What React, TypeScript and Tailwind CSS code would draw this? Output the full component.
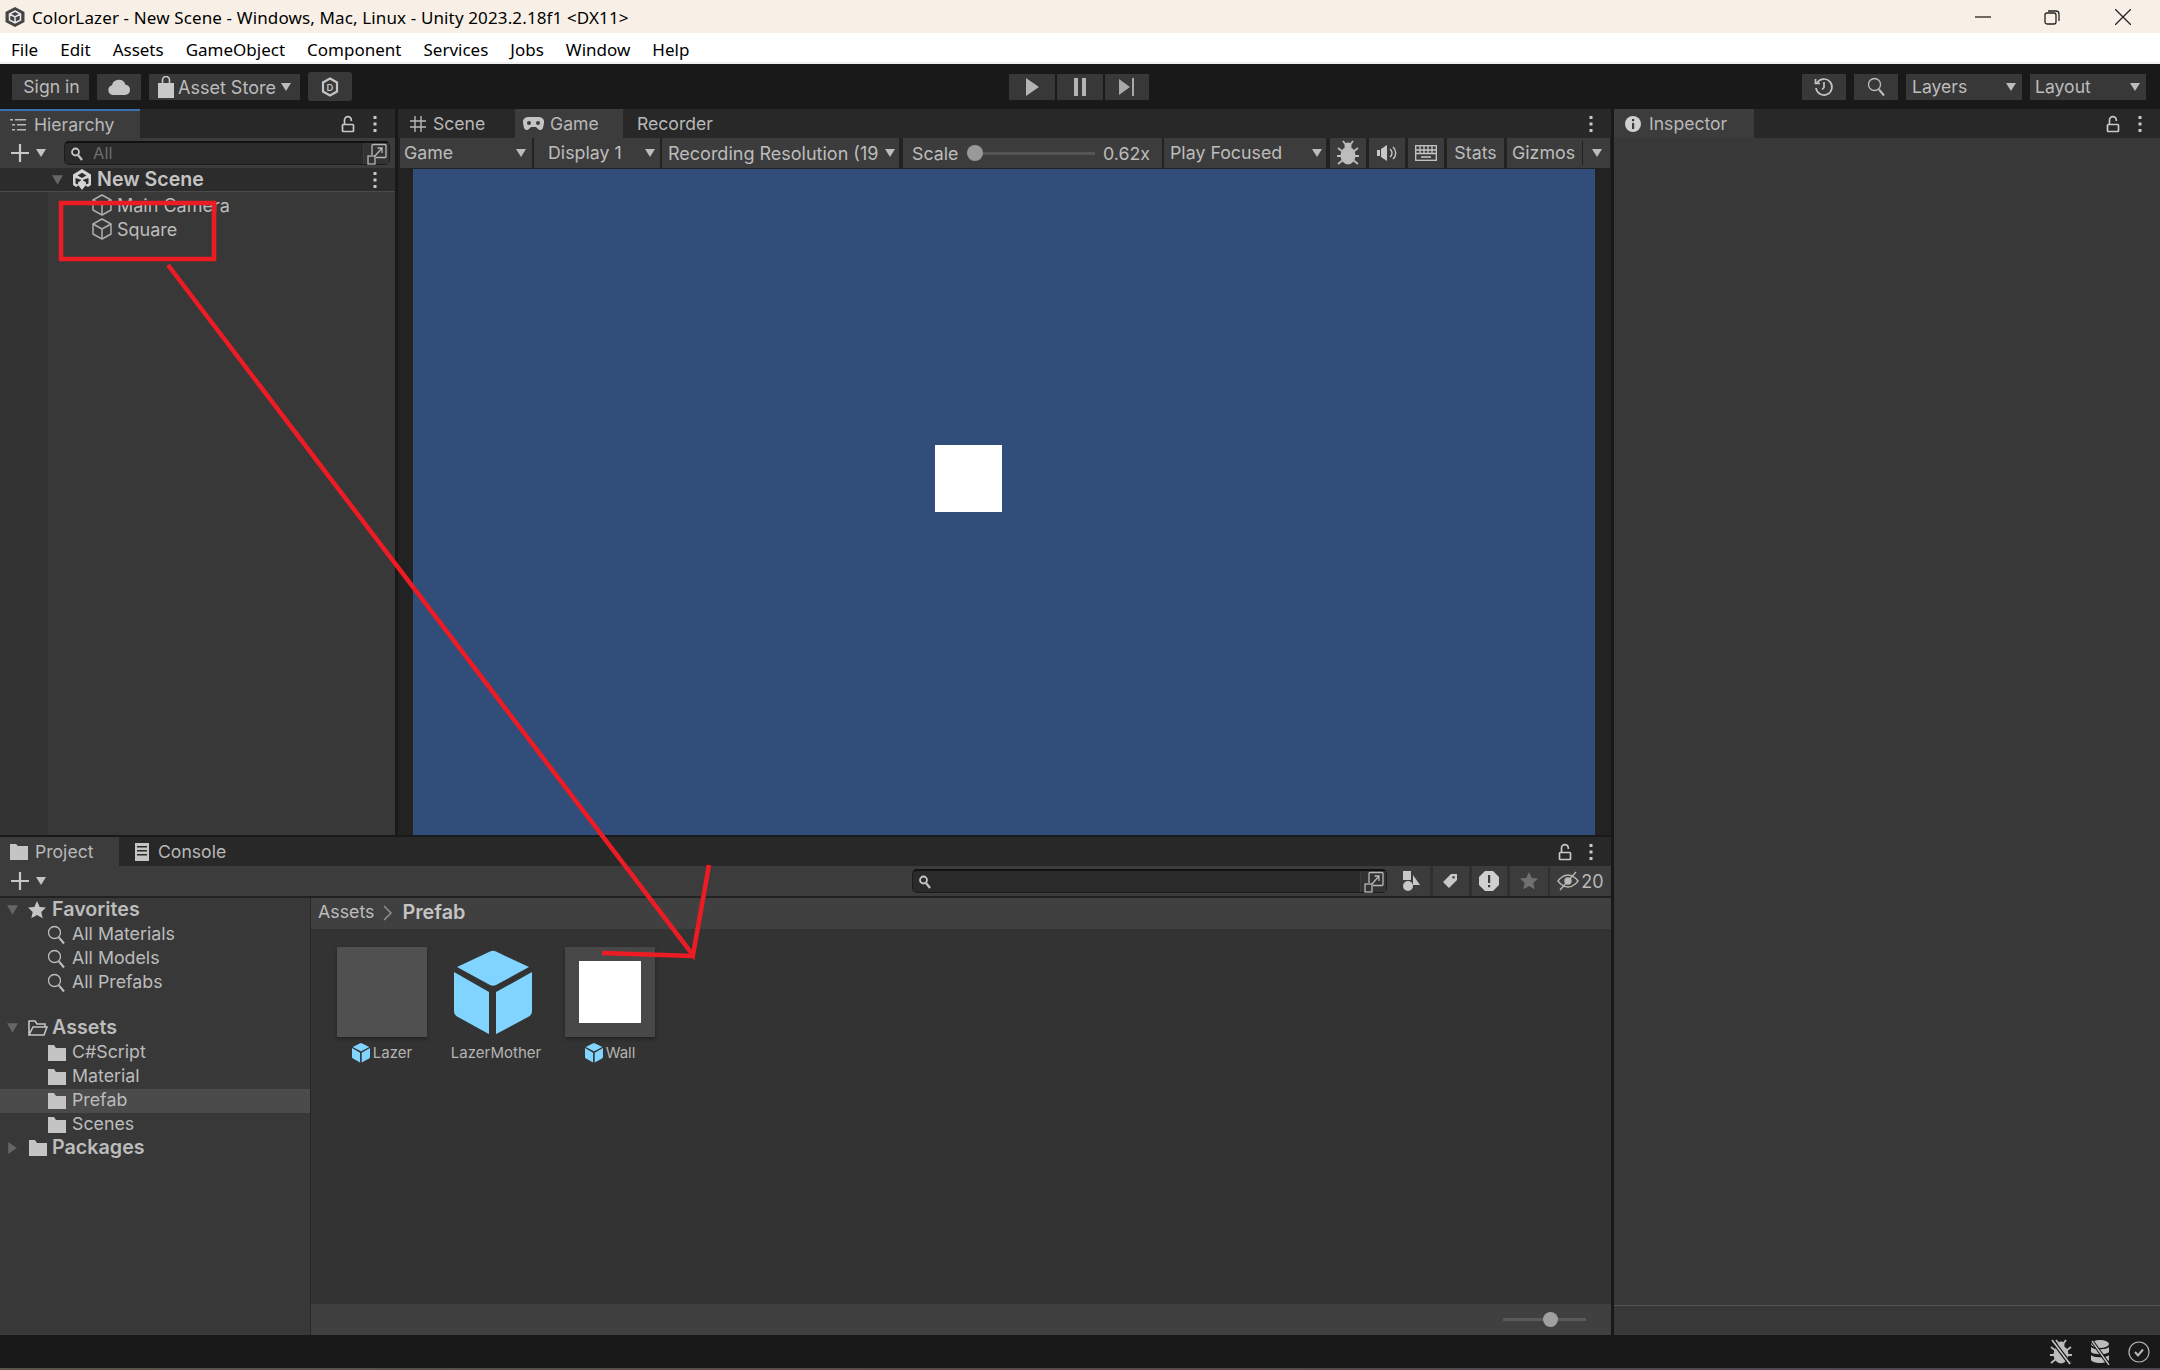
import React from 'react';

const inter = "font-['Inter','Noto_Sans',sans-serif]";

const Caret = ({ className = '', dir = 'down' }: { className?: string; dir?: 'down' | 'right' }) => (
  <svg width="12" height="10" viewBox="0 0 12 10" preserveAspectRatio="none" className={`shrink-0 ${className}`} fill="currentColor">
    {dir === 'down' ? <path d="M1 1h10L6 9z" /> : <path d="M2 0v10l8-5z" />}
  </svg>
);

const Kebab = () => (
  <svg width="6" height="18" viewBox="0 0 6 18" fill="#c8c8c8">
    <rect x="1.5" y="1" width="3" height="3" />
    <rect x="1.5" y="7.5" width="3" height="3" />
    <rect x="1.5" y="14" width="3" height="3" />
  </svg>
);

const Lock = () => (
  <svg width="14" height="18" viewBox="0 0 14 18" fill="none" stroke="#c8c8c8" strokeWidth="1.7" className="ml-[1px]">
    <path d="M3.500 9.500V5a3.400 3.400 0 0 1 6.800 0v1" />
    <rect x="1.500" y="9.500" width="11" height="7" rx=".8" />
  </svg>
);

const CubeOutline = () => (
  <svg width="22" height="24" viewBox="0 0 22 24" fill="none" stroke="#adadad" strokeWidth="1.5" strokeLinejoin="round">
    <path d="M11 2l9 5v10l-9 5-9-5V7z" />
    <path d="M2 7l9 5 9-5M11 12v10" />
  </svg>
);

const BlueCube = ({ size = 18 }: { size?: number }) => (
  <svg width={size} height={size * 1.08} viewBox="0 0 78 84" fill="#80d4ff">
    <path d="M36 1.500q3-1.500 6 0L75 17 42 35q-3 1.500-6 0L3 17z" />
    <path d="M0 22l35 20v42L4 67q-4-2-4-6z" />
    <path d="M78 22L42 42v42l32-17q4-2 4-6z" />
  </svg>
);

const Folder = ({ open = false }: { open?: boolean }) => (
  <svg width="20" height="18" viewBox="0 0 20 18" className="shrink-0" fill={open ? 'none' : '#c4c4c4'} stroke={open ? '#c4c4c4' : 'none'} strokeWidth="1.6">
    {open ? (
      <path d="M1 16V2h6l2 3h8v3M1 16h15l3-8H5z" />
    ) : (
      <path d="M1 1h6l2 3h10v13H1z" />
    )}
  </svg>
);

const Magnifier = () => (
  <svg width="18" height="20" viewBox="0 0 18 20" className="shrink-0" fill="none" stroke="#bdbdbd" strokeWidth="1.3">
    <circle cx="7.5" cy="7.5" r="6" />
    <path d="M12 12.5l5 6" strokeWidth="2" />
  </svg>
);

const MaximizeGlyph = () => (
  <svg width="20" height="22" viewBox="0 0 20 22" fill="none" stroke="#b8b8b8" strokeWidth="1.3">
    <path d="M5 12V2.500a1 1 0 0 1 1-1h12a1 1 0 0 1 1 1v11a1 1 0 0 1-1 1H9" />
    <rect x="1" y="13" width="7" height="8" />
    <path d="M8 13l7-8M10.500 5H15v5" />
  </svg>
);

// the three-armed Unity cube, used in the scene header
const UnityMark = ({ className = '' }: { className?: string }) => (
  <svg width="20" height="22" viewBox="0 0 20 22" className={className} fill="#d4d4d4">
    <path
      fillRule="evenodd"
      d="M10 0l9 5.500v10.500l-3 2-2.500-1.500-3.500 4.500-3.500-4.500L4 18l-3-2V5.500zM10 3.800L5.500 6.400 10 9l4.500-2.600zM3.500 9v5.500l2.500 1v-2.200l3-1.700v-.8zM16.500 9L11 10.800v.8l3 1.700v2.200l2.500-1z"
    />
  </svg>
);

const TitleLogo = () => (
  <svg width="22" height="22" viewBox="0 0 22 22" className="mr-[6px] ml-[3px]">
    <path d="M11 1l9.500 5v10L11 21l-9.500-5V6z" fill="#444" />
    <path d="M11 5l5.500 3v6L11 17l-5.500-3V8zM5.500 8l5.500 3 5.500-3M11 11v6" fill="none" stroke="#e8e8e8" strokeWidth="1.500" />
  </svg>
);

const Bug = ({ off = false }: { off?: boolean }) => (
  <svg width="22" height="26" viewBox="0 0 22 26" fill="#bcbcbc">
    <ellipse cx="11" cy="15.500" rx="7.500" ry="9" />
    <circle cx="11" cy="6" r="3.500" />
    <path d="M6 1l3 4M16 1l-3 4M1 8l5 4M21 8l-5 4M0 16h5M22 16h-5M1 24l5-4M21 24l-5-4" stroke="#bcbcbc" strokeWidth="1.800" fill="none" />
    {off && <path d="M2 1l18 24" stroke="#191919" strokeWidth="4" />}
    {off && <path d="M2 1l18 24" stroke="#c8c8c8" strokeWidth="1.500" />}
  </svg>
);

const ToolBtn = ({ className = '', children }: { className?: string; children: React.ReactNode }) => (
  <div className={`flex items-center bg-[#383838] h-[26px] text-[#bcbcbc] ${className}`}>{children}</div>
);

const TabLabel = ({ icon, label, active, className = '' }: { icon: React.ReactNode; label: string; active?: boolean; className?: string }) => (
  <div className={`flex items-center h-[29px] text-[17.600px] text-[#b8b8b8] ${active ? 'bg-[#3c3c3c]' : ''} ${className}`}>
    {icon}
    <span className="pt-[2px]">{label}</span>
  </div>
);

const GameSeg = ({ className = '', children }: { className?: string; children: React.ReactNode }) => (
  <div className={`flex items-center h-[30px] bg-[#3c3c3c] text-[#bcbcbc] text-[17.800px] shrink-0 ${className}`}>{children}</div>
);

const FilterBtn = ({ className = '', children }: { className?: string; children: React.ReactNode }) => (
  <div className={`flex items-center justify-center h-[30px] bg-[#3c3c3c] shrink-0 ${className}`}>{children}</div>
);

const SearchField = ({ className = '', label }: { className?: string; label?: string }) => (
  <div className={`flex items-center h-[24px] rounded-[5px] border border-[#1c1c1c] border-t-[2px] border-t-[#111] bg-[#2a2a2a] ${className}`}>
    <svg width="14" height="14" viewBox="0 0 14 14" className="ml-[5px] shrink-0" fill="none" stroke="#c4c4c4">
      <circle cx="5.500" cy="5" r="3.500" strokeWidth="1.800" />
      <path d="M8 8l4 5" strokeWidth="2.200" />
    </svg>
    {label && <span className="ml-[9px] text-[16.500px] text-[#6e6e6e]">{label}</span>}
    <div className="ml-auto flex h-full w-[26px] items-center justify-center border-l border-[#3c3c3c] bg-[#333]">
      <MaximizeGlyph />
    </div>
  </div>
);

const TreeRow = ({ depth, label, bold, icon, caret, active }: { depth: number; label: string; bold?: boolean; icon: React.ReactNode; caret?: 'down' | 'right'; active?: boolean }) => (
  <div className={`flex items-center h-[24px] text-[#bcbcbc] ${active ? 'bg-[#4b4b4b]' : ''} ${bold ? 'pb-[3px] text-[19.700px] font-semibold' : 'text-[17.800px]'}`}>
    {depth === 0 ? (
      <>
        <div className="w-[28px] pl-[6px] text-[#666]">{caret && <Caret dir={caret} className="h-[12px] w-[13px]" />}</div>
        <div className="w-[24px] flex justify-start">{icon}</div>
      </>
    ) : (
      <div className="w-[72px] pl-[47px]">{icon}</div>
    )}
    <span className={bold ? '' : 'pb-[2px]'}>{label}</span>
  </div>
);

const PrefabTile = ({ label, hasIcon, children }: { label: string; hasIcon?: boolean; children: React.ReactNode }) => (
  <div className="flex w-[114px] flex-col items-center">
    <div className="flex h-[90px] w-full items-center justify-center">{children}</div>
    <div className="mt-[6px] flex h-[20px] items-center gap-[3px] text-[15px] text-[#b4b4b4]">
      {hasIcon && <BlueCube size={18} />}
      <span>{label}</span>
    </div>
  </div>
);

export default function App() {
  return (
    <div className={`relative flex h-[1370px] w-[2160px] flex-col overflow-hidden bg-[#191919] ${inter}`}>
      {/* window title */}
      <div className="flex h-[33px] items-center bg-[#f8f0e6] pl-[1px] text-[17px] text-black font-['Noto_Sans',sans-serif]">
        <TitleLogo />
        <span className="pt-[2px] tracking-[0.130px]">ColorLazer - New Scene - Windows, Mac, Linux - Unity 2023.2.18f1 &lt;DX11&gt;</span>
        <div className="ml-auto flex items-center">
          <svg width="16" height="16" viewBox="0 0 16 16" className="mr-[53px]" stroke="#222" strokeWidth="1.3">
            <path d="M0 8h16" />
          </svg>
          <svg width="16" height="16" viewBox="0 0 16 16" className="mr-[55px]" fill="none" stroke="#222" strokeWidth="1.3">
            <rect x="1" y="4" width="11" height="11" rx="2" />
            <path d="M4 2h8a3 3 0 0 1 3 3v7" />
          </svg>
          <svg width="16" height="16" viewBox="0 0 16 16" className="mr-[29px]" stroke="#222" strokeWidth="1.3">
            <path d="M0 0l16 16M16 0L0 16" />
          </svg>
        </div>
      </div>

      {/* menu */}
      <div className="flex h-[31px] items-center gap-[22px] border-b-2 border-[#f0f0f0] bg-white pl-[11px] pt-[4px] text-[17px] text-black font-['Noto_Sans',sans-serif]">
        {['File', 'Edit', 'Assets', 'GameObject', 'Component', 'Services', 'Jobs', 'Window', 'Help'].map((m) => (
          <span key={m}>{m}</span>
        ))}
      </div>

      {/* toolbar */}
      <div className="grid h-[45px] grid-cols-[1fr_auto_1fr] items-center pl-[12px] pr-[14px] text-[17.600px]">
        <div className="flex items-center gap-[8px]">
          <ToolBtn className="w-[77px] justify-center pl-[2px] pt-[1px]">Sign in</ToolBtn>
          <ToolBtn className="w-[44px] justify-center">
            <svg width="24" height="16" viewBox="0 0 24 16" fill="#c4c4c4">
              <path d="M6 16a5 5 0 0 1-1-9.800 7 7 0 0 1 13.500-.5A5.200 5.200 0 0 1 18.500 16z" />
            </svg>
          </ToolBtn>
          <ToolBtn className="w-[151px] pl-[8px]">
            <svg width="18" height="22" viewBox="0 0 18 22" fill="none" className="mr-[3px]">
              <path d="M1 7h16v15H1z" fill="#c8c8c8" />
              <path d="M5.500 8V4a3.500 3.500 0 0 1 7 0v4" stroke="#c8c8c8" strokeWidth="1.600" />
            </svg>
            <span className="pt-[1px] text-[18px]">Asset Store</span>
            <Caret className="ml-[4px]" />
          </ToolBtn>
          <div className="flex h-[29px] w-[44px] items-center justify-center rounded-[3px] bg-[#383838]">
            <svg width="18" height="20" viewBox="0 0 18 20" fill="none" stroke="#c4c4c4" strokeWidth="2.200">
              <path d="M9 1.500l7 4v9l-7 4-7-4v-9z" />
              <text x="9" y="13.500" textAnchor="middle" fontSize="9.500" fontWeight="600" fill="#c4c4c4" stroke="none">D</text>
            </svg>
          </div>
        </div>
        <div className="flex items-center gap-[2px]">
          <ToolBtn className="w-[46px] justify-center">
            <svg width="14" height="18" viewBox="0 0 14 18" fill="#b4b4b4"><path d="M1 0l13 9-13 9z" /></svg>
          </ToolBtn>
          <ToolBtn className="w-[46px] justify-center">
            <svg width="14" height="18" viewBox="0 0 14 18" fill="#b4b4b4"><path d="M1 0h4v18H1zM9 0h4v18H9z" /></svg>
          </ToolBtn>
          <ToolBtn className="w-[44px] justify-center bg-[#202020]">
            <svg width="16" height="18" viewBox="0 0 16 18" fill="#a8a8a8"><path d="M0 1l11 8-11 8zM13 0h2v18h-2z" /></svg>
          </ToolBtn>
        </div>
        <div className="flex items-center justify-end gap-[8px]">
          <ToolBtn className="w-[44px] justify-center">
            <svg width="20" height="20" viewBox="0 0 20 20" fill="none" stroke="#c4c4c4" strokeWidth="1.700">
              <path d="M3 6a8 8 0 1 1-1 5M1.500 2v4.500H6M10 5v5.500l-2 2" />
            </svg>
          </ToolBtn>
          <ToolBtn className="w-[44px] justify-center"><Magnifier /></ToolBtn>
          <ToolBtn className="w-[116px] justify-between pl-[6px] pr-[5px]">
            <span className="pt-[1px]">Layers</span>
            <Caret />
          </ToolBtn>
          <ToolBtn className="w-[116px] justify-between pl-[5px] pr-[5px]">
            <span className="pt-[1px]">Layout</span>
            <Caret />
          </ToolBtn>
        </div>
      </div>

      <div className="flex h-[1226px]">
        <div className="flex w-[1611px] flex-col gap-[2px]">
          <div className="flex h-[726px] gap-[3px]">
            {/* hierarchy */}
            <div className="flex w-[395px] flex-col bg-[#383838]">
              <div className="flex h-[29px] items-center justify-between bg-[#282828] pr-[17px]">
                <TabLabel active className="w-[140px] border-t-2 border-[#3a72b0] pl-[10px]" label="Hierarchy" icon={
                  <svg width="16" height="16" viewBox="0 0 16 16" className="mr-[8px]" fill="#b8b8b8">
                    <path d="M0 2h3v1.500H0zM5 2h11v1.500H5zM2 7h3v1.500H2zM7 7h9v1.500H7zM2 12h3v1.500H2zM7 12h9v1.500H7z" />
                  </svg>
                } />
                <div className="flex items-center gap-[17px]"><Lock /><Kebab /></div>
              </div>
              <div className="flex h-[30px] items-center bg-[#3c3c3c] pr-[5px] pl-[11px] text-[#c4c4c4]">
                <svg width="18" height="18" viewBox="0 0 18 18" stroke="#c8c8c8" strokeWidth="2.200"><path d="M9 0v18M0 9h18" /></svg>
                <Caret className="ml-[6px] mr-[17px]" />
                <SearchField className="flex-1" label="All" />
              </div>
              <div className="flex h-[24px] items-center border-b border-[#4a4a4a] bg-[#2c2c2c] pr-[17px] text-[#c4c4c4]">
                <Caret className="ml-[51px] mr-[8px] h-[12px] w-[13px] text-[#666]" />
                <UnityMark className="mr-[5px]" />
                <span className="pt-[1px] text-[19.600px] font-semibold">New Scene</span>
                <div className="ml-auto pt-[1px]"><Kebab /></div>
              </div>
              <div className="flex flex-1">
                <div className="w-[48px] bg-[#333]" />
                <div className="flex flex-col pl-[44px] pt-[1px] text-[18px] text-[#bcbcbc]">
                  <div className="flex h-[24px] items-center gap-[4px] -ml-[1px]"><CubeOutline /><span className="pt-[1px]">Main Camera</span></div>
                  <div className="flex h-[24px] items-center gap-[4px] -ml-[1px]"><CubeOutline /><span className="pt-[1px]">Square</span></div>
                </div>
              </div>
            </div>

            {/* game */}
            <div className="flex flex-1 flex-col">
              <div className="flex h-[29px] items-center bg-[#282828] pr-[17px]">
                <TabLabel className="w-[117px] pl-[12px]" label="Scene" icon={
                  <svg width="16" height="16" viewBox="0 0 16 16" className="mr-[7px]" stroke="#b8b8b8" strokeWidth="1.400">
                    <path d="M5 0v16M11 0v16M0 5h16M0 11h16" />
                  </svg>
                } />
                <TabLabel active className="w-[108px] pl-[8px]" label="Game" icon={
                  <svg width="21" height="14" viewBox="0 0 21 14" className="mr-[6px]" fill="#c4c4c4">
                    <path d="M5 0h11a5 5 0 0 1 5 6l-1 5a3 3 0 0 1-5 1l-2-2H8l-2 2a3 3 0 0 1-5-1L0 6a5 5 0 0 1 5-6z" />
                    <circle cx="6" cy="6" r="2" fill="#3c3c3c" />
                    <circle cx="15" cy="6" r="2" fill="#3c3c3c" />
                  </svg>
                } />
                <span className="ml-[14px] pt-[2px] text-[17.600px] text-[#b8b8b8]">Recorder</span>
                <div className="ml-auto"><Kebab /></div>
              </div>
              <div className="flex h-[31px] items-start gap-[2px] bg-[#222] pl-[2px]">
                <GameSeg className="w-[132px] justify-between pl-[4px] pr-[5px]"><span className="pt-[1px]">Game</span><Caret /></GameSeg>
                <GameSeg className="w-[126px] justify-between pl-[14px] pr-[4px]"><span className="pt-[1px]">Display 1</span><Caret /></GameSeg>
                <GameSeg className="w-[237px] pl-[6px] pr-[3px]">
                  <span className="whitespace-nowrap pt-[1px] text-[18px]">Recording Resolution (19</span>
                  <Caret className="ml-auto" />
                </GameSeg>
                <GameSeg className="ml-[2px] w-[259px] pl-[9px] pr-[12px]">
                  <span className="pt-[3px]">Scale</span>
                  <div className="relative ml-[9px] h-[3px] w-[128px] bg-[#555]">
                    <div className="absolute -top-[7px] left-0 h-[16px] w-[16px] rounded-full bg-[#999]" />
                  </div>
                  <span className="ml-auto pt-[3px]">0.62x</span>
                </GameSeg>
                <GameSeg className="w-[162px] justify-between pl-[6px] pr-[3px]"><span className="pt-[1px]">Play Focused</span><Caret /></GameSeg>
                <GameSeg className="ml-[2px] w-[36px] justify-center"><Bug /></GameSeg>
                <GameSeg className="ml-[1px] w-[36px] justify-center">
                  <svg width="20" height="18" viewBox="0 0 20 18" fill="#c8c8c8">
                    <path d="M0 6h3v6H0zM4 5l6-4v16l-6-4z" />
                    <path d="M13 5a5 5 0 0 1 0 8M16 3a8 8 0 0 1 0 12" fill="none" stroke="#c8c8c8" strokeWidth="1.400" />
                  </svg>
                </GameSeg>
                <GameSeg className="ml-[1px] w-[36px] justify-center">
                  <svg width="22" height="16" viewBox="0 0 22 16" fill="none" stroke="#c8c8c8" strokeWidth="1.300">
                    <rect x=".7" y=".7" width="20.600" height="14.600" />
                    <path d="M1 5h20M1 8.500h20M5 1v8M9 1v8M13 1v8M17 1v8M6 12h10" />
                  </svg>
                </GameSeg>
                <GameSeg className="ml-[1px] w-[57px] justify-center"><span className="pt-[1px]">Stats</span></GameSeg>
                <GameSeg className="ml-[1px] w-[103px] pl-[5px]">
                  <span className="pt-[1px]">Gizmos</span>
                  <div className="ml-[7px] h-[24px] w-px bg-[#222]" />
                  <Caret className="ml-[8px]" />
                </GameSeg>
              </div>
              <div className="flex flex-1 bg-[#222] px-[15px]">
                <div className="h-full w-[1182px] bg-[#314d79] pl-[522px] pt-[276px]">
                  <div className="h-[67px] w-[67px] bg-white" />
                </div>
              </div>
            </div>
          </div>

          {/* project */}
          <div className="flex flex-1 flex-col bg-[#333]">
            <div className="flex h-[29px] items-center bg-[#282828] pr-[17px]">
              <TabLabel active className="w-[119px] pl-[10px]" label="Project" icon={
                <svg width="18" height="16" viewBox="0 0 18 16" className="mr-[7px]" fill="#c4c4c4"><path d="M0 0h6l2 2h10v14H0z" /></svg>
              } />
              <TabLabel className="ml-[15px]" label="Console" icon={
                <svg width="16" height="18" viewBox="0 0 16 18" className="mr-[8px]" fill="#c4c4c4"><path fillRule="evenodd" d="M1 0h14v18H1zM3 3v1.500h10V3zM3 7v1.500h10V7zM3 11v1.500h10V11z" /></svg>
              } />
              <div className="ml-auto flex items-center gap-[16px]"><Lock /><Kebab /></div>
            </div>
            <div className="flex h-[32px] items-start border-b-2 border-[#222] bg-[#3c3c3c]">
              <div className="flex h-[30px] flex-1 items-center pl-[11px] text-[#c4c4c4]">
                <svg width="18" height="18" viewBox="0 0 18 18" stroke="#c8c8c8" strokeWidth="2.200"><path d="M9 0v18M0 9h18" /></svg>
                <Caret className="ml-[6px]" />
                <SearchField className="ml-auto w-[475px]" />
              </div>
              <div className="ml-[7px] flex gap-[3px] bg-[#303030]">
                <FilterBtn className="w-[36px]">
                  <svg width="20" height="20" viewBox="0 0 20 20" fill="#c8c8c8">
                    <rect x="1" y="0" width="8" height="9" />
                    <path d="M11 4l7 10h-7z" />
                    <circle cx="6" cy="15" r="5" />
                  </svg>
                </FilterBtn>
                <FilterBtn className="w-[36px]">
                  <svg width="16" height="16" viewBox="0 0 16 16" className="-ml-[2px]" fill="#c8c8c8"><path fillRule="evenodd" d="M9 1h6v6l-8 8-6-6zM11.500 3a1.300 1.300 0 1 0 .01 0z" /></svg>
                </FilterBtn>
                <FilterBtn className="w-[35px]">
                  <svg width="20" height="20" viewBox="0 0 20 20" className="-ml-[2px]"><path d="M6 0h8l6 6v8l-6 6H6l-6-6V6z" fill="#d0d0d0" /><path d="M9 4h2.200v8H9zM9 14h2.200v2.200H9z" fill="#3c3c3c" /></svg>
                </FilterBtn>
                <FilterBtn className="w-[38px]">
                  <svg width="18" height="18" viewBox="0 0 18 18" fill="#707070"><path d="M9 0l2.700 6 6.300.6-4.700 4.300 1.400 6.400L9 14l-5.700 3.300 1.400-6.400L0 6.600 6.300 6z" /></svg>
                </FilterBtn>
                <FilterBtn className="-ml-[1px] w-[61px] gap-[2px] text-[18px] text-[#b8b8b8]">
                  <svg width="22" height="20" viewBox="0 0 22 20" fill="none" stroke="#b8b8b8" strokeWidth="1.400">
                    <path d="M1 10s4-6 10-6 10 6 10 6-4 6-10 6-10-6-10-6z" />
                    <circle cx="11" cy="10" r="3" fill="#b8b8b8" />
                    <path d="M3 19L19 1" />
                  </svg>
                  <span>20</span>
                </FilterBtn>
              </div>
            </div>
            <div className="flex flex-1">
              <div className="flex w-[311px] flex-col border-r border-[#262626] bg-[#383838] pb-[37px] pt-[1px]">
                <TreeRow depth={0} caret="down" bold label="Favorites" icon={
                  <svg width="18" height="18" viewBox="0 0 18 18" fill="#c4c4c4"><path d="M9 0l2.700 6 6.300.6-4.700 4.300 1.400 6.400L9 14l-5.700 3.300 1.400-6.400L0 6.600 6.300 6z" /></svg>
                } />
                <TreeRow depth={1} label="All Materials" icon={<Magnifier />} />
                <TreeRow depth={1} label="All Models" icon={<Magnifier />} />
                <TreeRow depth={1} label="All Prefabs" icon={<Magnifier />} />
                <div className="h-[22px]" />
                <TreeRow depth={0} caret="down" bold label="Assets" icon={<Folder open />} />
                <TreeRow depth={1} label="C#Script" icon={<Folder />} />
                <TreeRow depth={1} label="Material" icon={<Folder />} />
                <TreeRow depth={1} active label="Prefab" icon={<Folder />} />
                <TreeRow depth={1} label="Scenes" icon={<Folder />} />
                <TreeRow depth={0} caret="right" bold label="Packages" icon={<Folder />} />
              </div>
              <div className="flex flex-1 flex-col">
                <div className="flex h-[31px] items-center bg-[#404040] pb-[2px] pl-[7px] text-[17.800px] text-[#bcbcbc]">
                  <span>Assets</span>
                  <svg width="10" height="16" viewBox="0 0 10 16" className="mx-[9px]" fill="none" stroke="#999" strokeWidth="1.300"><path d="M1 1l7 7-7 7" /></svg>
                  <span className="text-[19.800px] font-semibold text-[#c4c4c4]">Prefab</span>
                </div>
                <div className="flex flex-1 items-start pl-[14px] pt-[18px]">
                  <PrefabTile label="Lazer" hasIcon>
                    <div className="h-[90px] w-[90px] bg-[#505050] shadow-[0_2px_3px_#222]" />
                  </PrefabTile>
                  <PrefabTile label="LazerMother">
                    <div className="-ml-[7px]"><BlueCube size={78} /></div>
                  </PrefabTile>
                  <PrefabTile label="Wall" hasIcon>
                    <div className="flex h-[90px] w-[90px] items-center justify-center bg-[#484848] shadow-[0_2px_3px_#222]">
                      <div className="h-[62px] w-[62px] bg-white" />
                    </div>
                  </PrefabTile>
                </div>
                <div className="flex h-[31px] items-center justify-end bg-[#404040] pr-[25px]">
                  <div className="relative h-[3px] w-[83px] bg-[#5a5a5a]">
                    <div className="absolute -top-[6px] left-[40px] h-[15px] w-[15px] rounded-full bg-[#a0a0a0]" />
                  </div>
                </div>
              </div>
            </div>
          </div>
        </div>

        {/* inspector */}
        <div className="ml-[3px] flex flex-1 flex-col bg-[#383838]">
          <div className="flex h-[29px] items-center justify-between bg-[#282828] pr-[17px]">
            <TabLabel active className="w-[140px] pl-[11px]" label="Inspector" icon={
              <svg width="16" height="16" viewBox="0 0 16 16" className="mr-[8px]"><circle cx="8" cy="8" r="8" fill="#d0d0d0" /><path d="M7 3h2.200v2.200H7zM7 7h2.200v6H7z" fill="#3c3c3c" /></svg>
            } />
            <div className="flex items-center gap-[17px]"><Lock /><Kebab /></div>
          </div>
          <div className="flex-1 border-b border-[#555] mb-[29px]" />
        </div>
      </div>

      {/* status bar */}
      <div className="flex h-[33px] items-center justify-end gap-[17px] pr-[10px]">
        <Bug off />
        <svg width="22" height="26" viewBox="0 0 22 26" fill="#bcbcbc">
          <ellipse cx="11" cy="5" rx="9" ry="4" />
          <path d="M2 8c2 3 16 3 18 0v5c-2 3-16 3-18 0zM2 16c2 3 16 3 18 0v5c-2 4-16 4-18 0z" />
          <path d="M3 2l17 24" stroke="#191919" strokeWidth="3.500" />
          <path d="M3 2l17 24" stroke="#c8c8c8" strokeWidth="1.300" />
        </svg>
        <svg width="22" height="24" viewBox="0 0 22 24" fill="none" stroke="#b8b8b8" strokeWidth="1.200">
          <circle cx="11" cy="12" r="10" />
          <path d="M7 12l3 3.500 5-6" strokeWidth="2" />
        </svg>
      </div>
      <div className="absolute bottom-0 left-0 h-[2px] w-full bg-[linear-gradient(90deg,#57564a,#5a4a4a_45%,#4a4650)]" />

      {/* red annotation drawn over the screenshot */}
      <svg className="pointer-events-none absolute left-0 top-0" width="2160" height="1370" viewBox="0 0 2160 1370" fill="none" stroke="#ed1c24" strokeWidth="4.500">
        <rect x="61" y="203" width="153" height="56" />
        <path d="M168 265L693 955L709 865" />
        <path d="M602 953L693 956" />
      </svg>
    </div>
  );
}
